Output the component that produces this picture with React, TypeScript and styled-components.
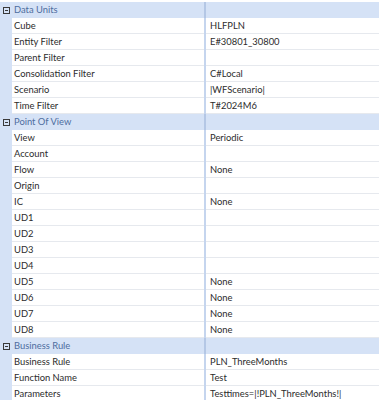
import React from "react";
import styled, { createGlobalStyle } from "styled-components";

const GlobalStyle = createGlobalStyle`
  html, body {
    margin: 0;
    padding: 0;
    background: #ffffff;
    overflow: hidden;
  }
  body {
    font-family: Lato, "Open Sans", "Liberation Sans", sans-serif;
  }
`;

const Grid = styled.div`
  width: 379px;
  height: 400px;
  overflow: hidden;
  display: flex;
  flex-direction: column;
  padding-top: 2px;
  box-sizing: border-box;
`;

const Row = styled.div<{ $header?: boolean }>`
  display: grid;
  grid-template-columns: 12px 192px 2px 1fr;
  height: 16px;
  flex: 0 0 16px;
  box-sizing: border-box;
  background: ${(p) => (p.$header ? "#d5e2f6" : "#ffffff")};
`;

const Gutter = styled.div`
  background: #d5e2f6;
  display: flex;
  align-items: center;
  justify-content: center;
`;

const Cell = styled.div<{ $header?: boolean }>`
  display: flex;
  align-items: center;
  padding-left: 2px;
  padding-bottom: 1px;
  font-size: 9.4px;
  white-space: nowrap;
  overflow: hidden;
  color: ${(p) => (p.$header ? "#4e6d9f" : "#2c2c2c")};
  border-bottom: ${(p) => (p.$header ? "none" : "1px solid #e6e9ee")};
`;

const ValueCell = styled(Cell)`
  padding-left: 4px;
`;

const Splitter = styled.div<{ $header?: boolean }>`
  background: ${(p) => (p.$header ? "#b4c7e5" : "#c5d5ee")};
`;

const CollapseIcon = () => (
  <svg width="7" height="7" viewBox="0 0 7 7">
    <rect x="0.5" y="0.5" width="6" height="6" fill="none" stroke="#3a3a3a" strokeWidth="1" />
    <line x1="2" y1="3.5" x2="5" y2="3.5" stroke="#3a3a3a" strokeWidth="1" />
  </svg>
);

type Prop = [string, string];

interface SectionProps {
  title: string;
  items: Prop[];
}

const Section: React.FC<SectionProps> = ({ title, items }) => (
  <>
    <Row $header>
      <Gutter>
        <CollapseIcon />
      </Gutter>
      <Cell $header>{title}</Cell>
      <Splitter $header />
      <ValueCell $header />
    </Row>
    {items.map(([label, value]) => (
      <Row key={label}>
        <Gutter />
        <Cell>{label}</Cell>
        <Splitter />
        <ValueCell>{value}</ValueCell>
      </Row>
    ))}
  </>
);

const sections: SectionProps[] = [
  {
    title: "Data Units",
    items: [
      ["Cube", "HLFPLN"],
      ["Entity Filter", "E#30801_30800"],
      ["Parent Filter", ""],
      ["Consolidation Filter", "C#Local"],
      ["Scenario", "|WFScenario|"],
      ["Time Filter", "T#2024M6"],
    ],
  },
  {
    title: "Point Of View",
    items: [
      ["View", "Periodic"],
      ["Account", ""],
      ["Flow", "None"],
      ["Origin", ""],
      ["IC", "None"],
      ["UD1", ""],
      ["UD2", ""],
      ["UD3", ""],
      ["UD4", ""],
      ["UD5", "None"],
      ["UD6", "None"],
      ["UD7", "None"],
      ["UD8", "None"],
    ],
  },
  {
    title: "Business Rule",
    items: [
      ["Business Rule", "PLN_ThreeMonths"],
      ["Function Name", "Test"],
      ["Parameters", "Testtimes=|!PLN_ThreeMonths!|"],
    ],
  },
];

export default function App() {
  return (
    <>
      <GlobalStyle />
      <Grid>
        {sections.map((s) => (
          <Section key={s.title} {...s} />
        ))}
      </Grid>
    </>
  );
}
